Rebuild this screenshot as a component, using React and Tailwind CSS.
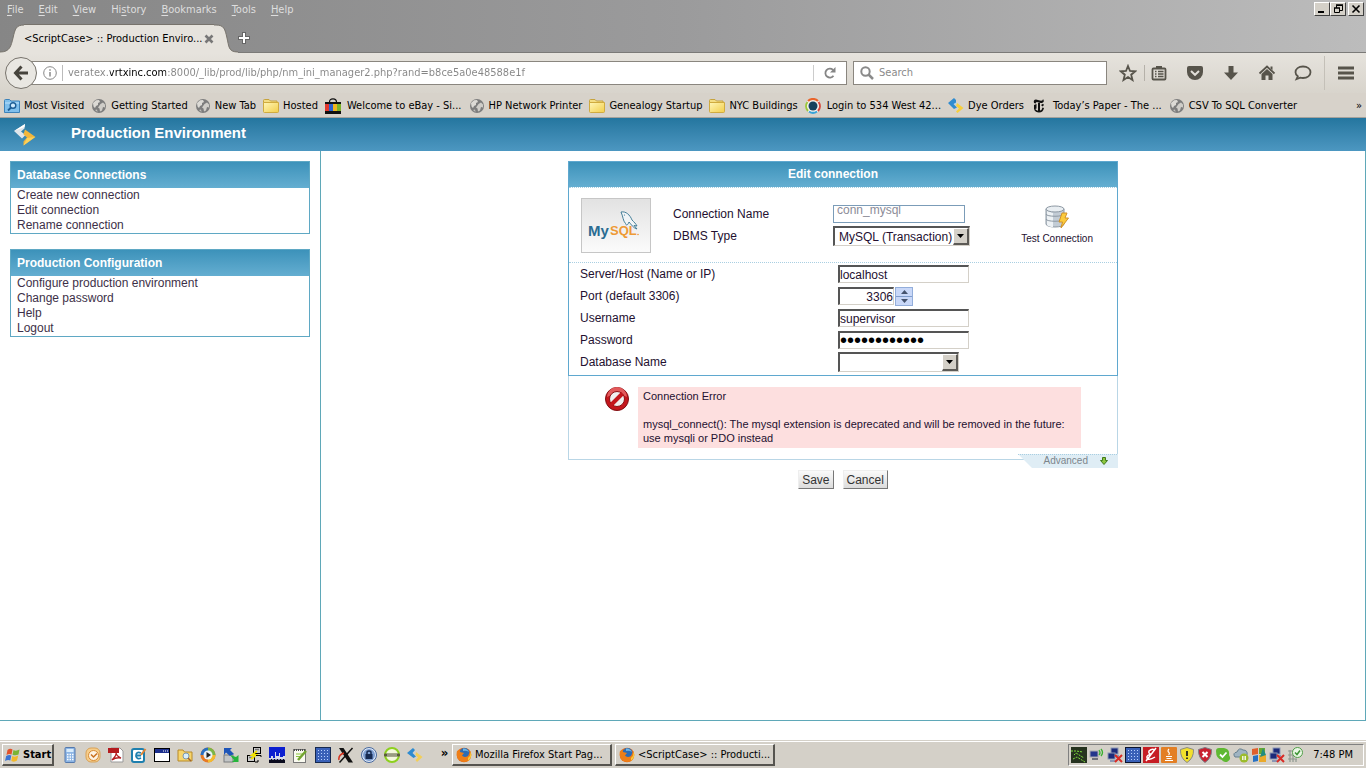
const menus = ['File', 'Edit', 'View', 'History', 'Bookmarks', 'Tools', 'Help'];
const underlined = [0, 0, 0, 2, 0, 0, 0];

function GlobeIcon() {
  return (
    <svg className="size-4 shrink-0" viewBox="0 0 16 16">
      <circle cx="8" cy="8" r="7" fill="#7d7d7d" />
      <path d="M2 5 L5 2.2 L8 2 L9 4 L7 5 L7 7 L5 8 L4 10 L2.5 8.5z" fill="#dcdad5" />
      <path d="M9.5 6 L12 4.5 L14 6.5 L14 9.5 L12 9 L11 12.5 L9 13.5 L8.5 10.5 L7 9.5z" fill="#cfcdc8" />
      <path d="M4 12 L6 11.5 L6.5 14z" fill="#c4c2bd" />
    </svg>
  );
}

function FolderIcon() {
  return (
    <svg className="size-4 shrink-0" viewBox="0 0 16 16">
      <defs>
        <linearGradient id="folder" x1="0" y1="0" x2="1" y2="1">
          <stop offset="0" stopColor="#fff6b8" />
          <stop offset="1" stopColor="#f2ce4a" />
        </linearGradient>
      </defs>
      <path d="M.5 3 V2.5 Q.5 1.5 1.5 1.5 H6 L7.5 3 H14 V6 H.5z" fill="#f3dd84" stroke="#c6a33e" />
      <path d="M.5 4.500 H15.500 V13.500 Q15.500 14.500 14.500 14.500 H1.500 Q.5 14.500 .5 13.500z" fill="url(#folder)" stroke="#d0ab3f" />
    </svg>
  );
}

function VisitedIcon() {
  return (
    <svg className="size-4 shrink-0" viewBox="0 0 16 16">
      <path d="M.5 2.500 Q.5 1.500 1.500 1.500 H5.500 L7 3 H15.500 V14.500 H.5z" fill="#7fbfec" stroke="#3d82b9" />
      <path d="M1 5 H15" stroke="#bfe2fb" />
      <circle cx="9" cy="7.500" r="2.800" fill="#cfeafd" stroke="#1d5d96" strokeWidth="1.400" />
      <path d="M7 9.500 L4 12.500" stroke="#1d5d96" strokeWidth="1.800" />
    </svg>
  );
}

function EbayIcon() {
  return (
    <svg className="size-4 shrink-0" viewBox="0 0 16 16">
      <path d="M4.500 4 Q4.500 .8 8 .8 Q11.500 .8 11.500 4" fill="none" stroke="#111" strokeWidth="1.200" />
      <rect y="4" width="16" height="12" fill="#111" />
      <rect y="6" width="4" height="7" fill="#e2382e" />
      <rect x="4" y="6" width="4" height="7" fill="#2a62d0" />
      <rect x="8" y="6" width="4" height="7" fill="#f0b51e" />
      <rect x="12" y="6" width="4" height="7" fill="#7cb32b" />
    </svg>
  );
}

function RingIcon() {
  return (
    <svg className="size-4 shrink-0" viewBox="0 0 16 16">
      <circle cx="8" cy="8" r="7.500" fill="#f3f1ec" />
      <path d="M3 3 A7 7 0 0 1 13 3" fill="none" stroke="#e9652c" strokeWidth="2" />
      <path d="M13.500 4 A7 7 0 0 1 13 13" fill="none" stroke="#d5473b" strokeWidth="2" />
      <path d="M12 13.500 A7 7 0 0 1 4 13.500" fill="none" stroke="#38a3d8" strokeWidth="2" />
      <path d="M3 13 A7 7 0 0 1 2.500 4" fill="none" stroke="#9bc63b" strokeWidth="2" />
      <circle cx="8" cy="8" r="4.500" fill="#17425c" />
    </svg>
  );
}

function ArrowsIcon() {
  return (
    <svg className="size-4 shrink-0" viewBox="0 0 16 16">
      <path d="M0 5 L6 0 L8 2 V5 L5.500 6 L9 9.500 L6 11z" fill="#2f8bd0" />
      <path d="M6 6 L8.500 4 L8 6.500z" fill="#a9d5f2" />
      <path d="M9 5 L15.500 10 L9.500 15 L8 13.500 L11 10.500 L8 8z" fill="#f7cf3d" />
    </svg>
  );
}

function TimesIcon() {
  return (
    <svg className="size-4 shrink-0" viewBox="0 0 16 16">
      <path d="M3 5 Q2 1.500 5 1.500 L10 2.800 Q12 3 12 1 Q14 3.800 11 5 Q9 5.300 6 4 Q4.500 4 4.800 5.500z" fill="#111" />
      <path d="M3 7 L5.500 6 V10.500 L3 11.500z M7 5 H9 V13.500 H7z M10 7 L12 5.800 L13 7 L11.500 8.500z" fill="#111" />
      <path d="M3 11.500 Q4.500 14.500 8 14.500 Q12 14.500 13 10 L11.500 9.500 Q11 12.500 8.500 12.800 Q5 12.800 4.500 11z" fill="#111" />
    </svg>
  );
}

const bookmarks = [
  { label: 'Most Visited', icon: VisitedIcon },
  { label: 'Getting Started', icon: GlobeIcon },
  { label: 'New Tab', icon: GlobeIcon },
  { label: 'Hosted', icon: FolderIcon },
  { label: 'Welcome to eBay - Si...', icon: EbayIcon, wide: true },
  { label: 'HP Network Printer', icon: GlobeIcon },
  { label: 'Genealogy Startup', icon: FolderIcon },
  { label: 'NYC Buildings', icon: FolderIcon },
  { label: 'Login to 534 West 42...', icon: RingIcon, wide: true },
  { label: 'Dye Orders', icon: ArrowsIcon },
  { label: 'Today’s Paper - The ...', icon: TimesIcon, wide: true },
  { label: 'CSV To SQL Converter', icon: GlobeIcon }
];

function WindowButton({ label, children }) {
  return (
    <button
      aria-label={label}
      className="flex h-[14px] w-4 items-center justify-center border border-t-white border-r-[#404040] border-b-[#404040] border-l-white bg-[#d4d0c8]"
    >
      <svg className="h-[10px] w-3" viewBox="0 0 12 10" fill="none" stroke="#000">{children}</svg>
    </button>
  );
}

function TitleBar() {
  return (
    <div className="bg-linear-to-r from-[#868686] via-[#9b9b9c] to-[#bcbcbc]">
      <div className="flex h-[23px] items-start justify-between">
        <nav className="flex gap-[15px] pl-[7px] leading-5 text-[#dedede]">
          {menus.map((menu, index) => (
            <button key={menu}>
              {menu.slice(0, underlined[index])}
              <span className="underline underline-offset-2">{menu[underlined[index]]}</span>
              {menu.slice(underlined[index] + 1)}
            </button>
          ))}
        </nav>
        <div className="flex pt-[2px] pr-[2px]">
          <WindowButton label="Minimize">
            <path d="M2 8 H8" strokeWidth="2" />
          </WindowButton>
          <WindowButton label="Restore">
            <path d="M4.500 4 V1.500 H10.500 V6.500 H8" />
            <path d="M4 1 H11 M2 4 H8" strokeWidth="1.500" />
            <path d="M2.500 4 V8.500 H7.500 V4" />
          </WindowButton>
          <div className="w-[2px]"></div>
          <WindowButton label="Close">
            <path d="M2.500 1.500 L9.500 8.500 M9.500 1.500 L2.500 8.500" strokeWidth="1.600" />
          </WindowButton>
        </div>
      </div>
      <div className="flex h-[30px] items-end border-b border-[#7b7a78]">
        <svg className="-mb-px h-[29px] w-6" viewBox="0 0 24 29">
          <path d="M0 29 V28 C10 28 11 22 13 14 C15 5 16 1 24 1 V29z" fill="#e6e3dd" />
          <path d="M0 28 C10 28 11 22 13 14 C15 5 16 1 24 1" fill="none" stroke="#77736c" />
        </svg>
        <div className="-mb-px flex h-[29px] w-[190px] items-center justify-between border-t border-[#77736c] bg-[#e6e3dd]">
          <span className="whitespace-nowrap text-black">&lt;ScriptCase&gt; :: Production Enviro...</span>
          <button aria-label="Close tab">
            <svg className="size-[10px]" viewBox="0 0 10 10">
              <path d="M1.500 1.500 L8.500 8.500 M8.500 1.500 L1.500 8.500" stroke="#777" strokeWidth="2.600" />
            </svg>
          </button>
        </div>
        <svg className="-mb-px h-[29px] w-6" viewBox="0 0 24 29">
          <path d="M24 29 V28 C14 28 15 22 13 14 C11 5 10 1 2 1 H0 V29z" fill="#e6e3dd" />
          <path d="M24 28 C14 28 15 22 13 14 C11 5 10 1 2 1 H0" fill="none" stroke="#77736c" />
        </svg>
        <button aria-label="New tab" className="mb-2">
          <svg className="size-3" viewBox="0 0 12 12">
            <path d="M6 0 V12 M0 6 H12" stroke="#666" strokeWidth="4" />
            <path d="M6 1 V11 M1 6 H11" stroke="#fff" strokeWidth="2" />
          </svg>
        </button>
      </div>
    </div>
  );
}

function ToolButton({ label, children }) {
  return (
    <button aria-label={label} className="flex w-9 justify-center">
      <svg className="size-[18px]" viewBox="0 0 18 18" fill="#57544b">{children}</svg>
    </button>
  );
}

function NavBar() {
  return (
    <div className="flex h-10 items-center bg-linear-to-b from-[#e6e3dd] to-[#d8d4cc] pl-[5px]">
      <button aria-label="Back" className="z-10 flex size-8 shrink-0 items-center justify-center rounded-full border border-[#77736c] bg-[#e9e7e2]">
        <svg className="size-4" viewBox="0 0 16 16" fill="none" stroke="#46433c" strokeWidth="3">
          <path d="M8.500 1.500 L2.500 8 L8.500 14.500 M3 8 H15" />
        </svg>
      </button>
      <div className="-ml-2 flex h-6 grow items-center border border-[#8a867f] bg-white pl-[13px]">
        <svg className="size-[14px] shrink-0" viewBox="0 0 14 14" fill="none" stroke="#888">
          <circle cx="7" cy="7" r="6.300" />
          <path d="M7 6 V10.500" strokeWidth="1.500" />
          <path d="M7 3.200 V4.700" strokeWidth="1.500" />
        </svg>
        <div className="mx-[5px] h-4 w-px bg-[#bbb]"></div>
        <input
          aria-label="Address"
          defaultValue="veratex.vrtxinc.com:8000/_lib/prod/lib/php/nm_ini_manager2.php?rand=b8ce5a0e48588e1f"
          className="min-w-0 grow bg-linear-[90deg,#858585_42px,#000_42px,#000_98px,#858585_98px] bg-clip-text text-transparent outline-none"
        />
        <div className="h-4 w-px bg-[#ccc]"></div>
        <button aria-label="Reload" className="flex w-8 justify-center">
          <svg className="size-3" viewBox="0 0 12 12">
            <path d="M9.500 8.800 A4.500 4.500 0 1 1 9 2.800" fill="none" stroke="#858585" strokeWidth="1.800" />
            <path d="M11.500 0 V5.500 H6z" fill="#858585" />
          </svg>
        </button>
      </div>
      <div className="ml-[6px] flex h-6 w-[254px] items-center gap-[5px] border border-[#8a867f] bg-white pl-[6px]">
        <svg className="size-[14px] shrink-0" viewBox="0 0 14 14" fill="none" stroke="#8a8a8a" strokeWidth="2">
          <circle cx="5.500" cy="5.500" r="4.200" />
          <path d="M8.500 8.500 L13 13" strokeWidth="2.500" />
        </svg>
        <input aria-label="Search" placeholder="Search" className="min-w-0 grow outline-none placeholder:text-[#8a8a8a]" />
      </div>
      <div className="flex items-center pl-[3px]">
        <ToolButton label="Bookmark this page">
          <path d="M9 2 L11 7 L16.200 7.300 L12.200 10.700 L13.500 16 L9 13 L4.500 16 L5.800 10.700 L1.800 7.300 L7 7z" fill="none" stroke="#57544b" strokeWidth="1.800" />
        </ToolButton>
        <div className="-mr-1 -ml-[2px] h-4 w-px bg-[#b5b1a9]"></div>
        <ToolButton label="Bookmarks">
          <path d="M6 2 H12 V5 H6z" />
          <rect x="2.500" y="4.500" width="13" height="11" rx="1" fill="none" stroke="#57544b" strokeWidth="1.800" />
          <path d="M5 7.500 H6.500 M8 7.500 H13.500 M5 10 H6.500 M8 10 H13.500 M5 12.500 H6.500 M8 12.500 H13.500" stroke="#57544b" strokeWidth="1.300" />
        </ToolButton>
        <ToolButton label="Pocket">
          <path d="M1 4 Q1 2 3 2 H15 Q17 2 17 4 V8 A8 8 0 0 1 1 8z" />
          <path d="M5 7 L9 10.800 L13 7" fill="none" stroke="#e2dfd9" strokeWidth="2" />
        </ToolButton>
        <ToolButton label="Downloads">
          <path d="M6.500 2 H11.500 V8.500 H16 L9 16 L2 8.500 H6.500z" />
        </ToolButton>
        <ToolButton label="Home">
          <path d="M1.500 9.500 L9 2.500 L16.500 9.500" fill="none" stroke="#57544b" strokeWidth="1.800" />
          <path d="M3.500 10 L9 5 L14.500 10 V16 H10.500 V11.500 H7.500 V16 H3.500z M12.500 2.500 H14.500 V6 L12.500 4.500z" />
        </ToolButton>
        <ToolButton label="Hello">
          <path d="M9 2.500 C13.500 2.500 16.500 5 16.500 8.300 C16.500 11.500 13.500 14 9 14 C8 14 7 13.900 6.200 13.600 L2.500 15 L3.800 12.300 C2.300 11.300 1.500 10 1.500 8.300 C1.500 5 4.500 2.500 9 2.500z" fill="none" stroke="#57544b" strokeWidth="1.800" />
        </ToolButton>
        <div className="ml-[3px] h-[34px] w-px bg-[#c4c0b8]"></div>
        <button aria-label="Open menu" className="flex w-[41px] justify-center">
          <svg className="h-[14px] w-4" viewBox="0 0 16 14">
            <path d="M0 2 H16 M0 7 H16 M0 12 H16" stroke="#57544b" strokeWidth="3" />
          </svg>
        </button>
      </div>
    </div>
  );
}

function BookmarkBar() {
  return (
    <div className="flex h-[25px] items-center justify-between border-b border-[#a5a29c] bg-[#d7d2ca] px-1 pt-[2px] text-black">
      <div className="flex items-center gap-[7px]">
        {bookmarks.map(({ label, icon: Icon, wide }) => (
          <a key={label} href="#" className={`flex items-center whitespace-nowrap ${wide ? 'gap-[6px]' : 'gap-1'}`}>
            <Icon />
            {label}
          </a>
        ))}
      </div>
      <button>»</button>
    </div>
  );
}

function SideMenu({ title, links }) {
  return (
    <section className="border border-[#5fa8c4]">
      <h2 className="bg-linear-to-b from-[#3c92ba] to-[#64aed1] px-[6px] leading-[26px] font-bold text-white">{title}</h2>
      <ul className="px-[6px]">
        {links.map((link) => (
          <li key={link} className="leading-[15px]">
            <a href="#" className="text-[#3d3048]">{link}</a>
          </li>
        ))}
      </ul>
    </section>
  );
}

function DropArrow() {
  return (
    <span className="pointer-events-none absolute top-[2px] right-px bottom-px flex w-4 items-center justify-center border-t border-r-2 border-b-2 border-l border-t-white border-r-[#5c5a56] border-b-[#5c5a56] border-l-white bg-[#d4d0c8]">
      <svg className="h-1 w-[7px]" viewBox="0 0 7 4">
        <path d="M0 0 H7 L3.500 4z" />
      </svg>
    </span>
  );
}

const sunken = 'border-t-2 border-l-2 border-r border-b border-t-[#555] border-l-[#555] border-r-[#d4d0c8] border-b-[#d4d0c8] bg-white';

function MysqlLogo() {
  return (
    <svg className="h-[55px] w-[70px]" viewBox="0 0 70 55">
      <defs>
        <linearGradient id="tile" x1="0" y1="0" x2="0" y2="1">
          <stop offset="0" stopColor="#e2e2e2" />
          <stop offset="1" stopColor="#fbfbfb" />
        </linearGradient>
      </defs>
      <rect x=".5" y=".5" width="69" height="54" fill="url(#tile)" stroke="#c6c6c6" />
      <path d="M40 14 C45 13 49 17 51 22 C53 24 55 26 56 28 L53 27.500 L56 31 C52 30 50 26 48 24 C47 27 45 28 44.500 25.500 C42 23 42 18 40 14z" fill="#f1f5f7" stroke="#34738e" strokeWidth=".9" />
      <circle cx="43.500" cy="17" r=".6" fill="#34738e" />
      <text x="7" y="38" fontSize="15" fontWeight="bold" fontFamily="Liberation Sans, sans-serif" fill="#2a6c92">My</text>
      <text x="29" y="37" fontSize="13" fontWeight="bold" fontFamily="Liberation Sans, sans-serif" fill="#ee9a35">SQL</text>
      <circle cx="57" cy="36.500" r=".8" fill="#ee9a35" />
    </svg>
  );
}

function DatabaseIcon() {
  return (
    <svg className="h-6 w-6" viewBox="0 0 24 24">
      <path d="M1 4 V19 C1 23 19 23 19 19 V4z" fill="#c3ccd5" stroke="#8d98a3" />
      <path d="M2 6 V20 C3 21.500 6 22 8 22 V8z" fill="#eef2f5" />
      <ellipse cx="10" cy="4" rx="9" ry="3" fill="#e9eef2" stroke="#8d98a3" />
      <path d="M1 9 C1 12 19 12 19 9 M1 14 C1 17 19 17 19 14" fill="none" stroke="#8d98a3" />
      <path d="M17 8 H22 L20 13 H23.500 L16 23 L17.500 17 H14z" fill="#fbcb3c" stroke="#d0912a" />
    </svg>
  );
}

function ErrorIcon() {
  return (
    <svg className="size-6 shrink-0" viewBox="0 0 24 24">
      <circle cx="12" cy="12" r="11.500" fill="#c4161c" stroke="#7d1013" />
      <path d="M2 10 A10 10 0 0 1 22 10 Q12 4 2 10z" fill="#e2595b" />
      <circle cx="12" cy="12" r="7.500" fill="#efefef" stroke="#8d1013" />
      <path d="M6.500 17.500 L17.500 6.500" stroke="#c4161c" strokeWidth="4" />
    </svg>
  );
}

function TextRow({ id, label, children }) {
  return (
    <div className="flex h-[22px] items-center">
      <label htmlFor={id} className="w-[258px]">{label}</label>
      {children}
    </div>
  );
}

function ConnectionForm() {
  return (
    <form className="mx-auto w-[550px] text-[#241030]" onSubmit={(e) => e.preventDefault()}>
      <div className="border border-[#5fa8cf] bg-white">
        <h2 className="bg-linear-to-b from-[#3c92ba] to-[#64aed1] pr-5 text-center leading-[25px] font-bold text-white">
          Edit connection
        </h2>
        <div className="flex h-[76px] items-start border-y border-dotted border-[#a9cfe2] pt-[10px] pl-3">
          <MysqlLogo />
          <div className="ml-[22px] pt-[5px]">
            <div className="flex h-[22px] items-center">
              <label htmlFor="name" className="w-40">Connection Name</label>
              <input
                id="name"
                disabled
                defaultValue="conn_mysql"
                className="h-[18px] w-[132px] border border-[#7b9cb8] bg-white px-[3px] pb-[9px] text-[#8c8c98]"
              />
            </div>
            <div className="flex h-[22px] items-center">
              <label htmlFor="type" className="w-40">DBMS Type</label>
              <div className="relative">
                <select id="type" className={`block h-5 w-[137px] appearance-none pl-1 leading-4 ${sunken}`}>
                  <option>MySQL (Transaction)</option>
                </select>
                <DropArrow />
              </div>
            </div>
          </div>
          <button type="button" className="mr-6 ml-auto flex flex-col items-center gap-[2px] pt-[7px] text-[10px]">
            <DatabaseIcon />
            Test Connection
          </button>
        </div>
        <div className="pb-[2px] pl-[11px]">
          <TextRow id="host" label="Server/Host (Name or IP)">
            <input id="host" defaultValue="localhost" className={`h-[18px] w-[131px] ${sunken}`} />
          </TextRow>
          <TextRow id="port" label="Port (default 3306)">
            <input id="port" defaultValue="3306" className={`h-[18px] w-14 text-right ${sunken}`} />
            <span className="ml-px flex h-[19px] w-[18px] flex-col border border-[#93aedb] bg-[#c9d8f8]">
              <button type="button" aria-label="Increase port" className="flex grow items-center justify-center border-b border-[#7f9ccb]">
                <svg className="h-1 w-[7px]" viewBox="0 0 7 4"><path d="M0 4 H7 L3.500 0z" fill="#45536e" /></svg>
              </button>
              <button type="button" aria-label="Decrease port" className="flex grow items-center justify-center">
                <svg className="h-1 w-[7px]" viewBox="0 0 7 4"><path d="M0 0 H7 L3.500 4z" fill="#45536e" /></svg>
              </button>
            </span>
          </TextRow>
          <TextRow id="user" label="Username">
            <input id="user" defaultValue="supervisor" className={`h-[18px] w-[131px] ${sunken}`} />
          </TextRow>
          <TextRow id="pass" label="Password">
            <input
              id="pass"
              type="password"
              defaultValue="supervisor12"
              className={`h-[18px] w-[131px] text-[20px] leading-4 text-black ${sunken}`}
            />
          </TextRow>
          <TextRow id="database" label="Database Name">
            <div className="relative">
              <select id="database" className={`block h-5 w-[121px] appearance-none ${sunken}`}></select>
              <DropArrow />
            </div>
          </TextRow>
        </div>
      </div>

      <div className="relative flex border border-t-0 border-[#b9d6e6] pt-[11px] pr-9 pb-[11px] pl-9">
        <ErrorIcon />
        <div className="ml-[9px] grow bg-[#fddfdf] px-[5px] pt-[2px] pb-[3px] text-[11px] leading-[14px]">
          <p>Connection Error</p>
          <p className="pt-[14px]">
            mysql_connect(): The mysql extension is deprecated and will be removed in the future: use mysqli or PDO instead
          </p>
        </div>
        <button type="button" className="absolute -right-px -bottom-[9px] h-[14px] w-[100px] text-[10px] leading-[14px] text-[#7d868c]">
          <svg className="absolute inset-0" viewBox="0 0 100 14">
            <path d="M0 0 H100 V14 H14z" fill="#dfedf5" />
            <path d="M0 .5 H100" stroke="#a9cfe2" strokeDasharray="1 1" />
          </svg>
          <span className="relative flex items-center justify-end gap-3 pr-[10px]">
            Advanced
            <svg className="size-2" viewBox="0 0 8 8">
              <path d="M2.500 .5 H5.500 V3.500 H7.500 L4 7.500 L.5 3.500 H2.500z" fill="#8cc63e" stroke="#417a1c" />
            </svg>
          </span>
        </button>
      </div>

      <div className="mt-[10px] flex justify-center gap-[9px] text-[#333]">
        <FormButton>Save</FormButton>
        <FormButton>Cancel</FormButton>
      </div>
    </form>
  );
}

function FormButton({ children }) {
  return (
    <button
      type="button"
      className="h-[19px] border border-t-[#eee] border-r-[#777] border-b-[#777] border-l-[#eee] bg-linear-to-b from-[#fafafa] to-[#dcdcdc] px-[3px] leading-4"
    >
      {children}
    </button>
  );
}

function LogoIcon() {
  return (
    <svg className="h-6 w-6" viewBox="0 0 24 24">
      <path d="M1 8 L12 1 L11.500 5.500 L8 8.500 L12.500 12 L9 15.500z" fill="#dfe5ea" />
      <path d="M1 8 L12 1 L11.500 4z" fill="#fff" />
      <path d="M12 6.500 L22.500 14 L10.500 22.500 V18.500 L14 14.500 L10.500 11.500z" fill="#f3b73c" />
      <path d="M14 15 L22 14 L10.500 22.500z" fill="#fcd25c" />
    </svg>
  );
}

function FirefoxIcon() {
  return (
    <svg className="size-4 shrink-0" viewBox="0 0 16 16">
      <circle cx="8" cy="8" r="7.300" fill="#e66a14" />
      <circle cx="8.500" cy="6" r="5" fill="#2d6cb4" />
      <path d="M7 1.500 Q11 1 13 5 Q10 3 7 4z" fill="#6cb5e5" />
      <path d="M1 4 L3.500 2.500 L4 5 L8 6 L6 8.500 Q8 11 12 9 L14.500 4 Q16.500 10 12 14 Q6 16.500 2 12 Q0 8 1 4z" fill="#ee7e18" />
      <path d="M12 11 Q15 9 14.500 4.500 Q17 10 12 14z" fill="#f9cb38" />
    </svg>
  );
}

const launchers = [
  ['Calculator', <>
    <rect x="3" y=".5" width="10" height="15" rx="1" fill="#8db5e4" stroke="#5479ad" />
    <rect x="4.500" y="2" width="7" height="3" fill="#d9ecfb" />
    <path d="M5 7.500 H11.500 M5 10 H11.500 M5 12.500 H11.500" stroke="#fff" strokeWidth="1.500" strokeDasharray="1.500 1" />
  </>],
  ['Outlook', <>
    <rect x="1" y="1" width="14" height="14" rx="5" fill="#f6cd8a" stroke="#d9a256" />
    <circle cx="8.500" cy="8.500" r="5" fill="#fdf3e2" stroke="#d58a35" />
    <path d="M6 7.500 L8.500 10 L12 6.500" fill="none" stroke="#c9701f" strokeWidth="1.500" />
  </>],
  ['PDF reader', <>
    <path d="M3 1 H12 L15 4 V15 H3z" fill="#fff" stroke="#999" />
    <rect width="11" height="5" y="1" fill="#b41b1f" />
    <path d="M4 13 Q9 8 8 5 Q8 9 13 11 Q8 10 4 13z" fill="none" stroke="#b41b1f" strokeWidth="1.300" />
  </>],
  ['Notes', <>
    <rect x="1" y="2" width="12" height="13" rx="2" fill="#fff" stroke="#1e7fae" strokeWidth="2" />
    <path d="M10 6 Q5 4 5 9 Q6 13 10 11 M6 8.500 H10" fill="none" stroke="#1e7fae" strokeWidth="1.800" />
    <path d="M10 8 L14.500 2" stroke="#e08433" strokeWidth="2" />
  </>],
  ['Command window', <>
    <rect x=".5" y="1.500" width="15" height="13" fill="#fff" stroke="#000" />
    <rect x="1" y="2" width="14" height="4" fill="#1c2f8e" />
    <path d="M9 4 H14" stroke="#fff" strokeDasharray="1 1" />
  </>],
  ['Explorer', <>
    <path d="M1 3 H6 L7.500 5 H15 V14 H1z" fill="#f7d56b" stroke="#b78a29" />
    <circle cx="9" cy="9" r="3" fill="#d9eefa" stroke="#7c98ae" />
    <path d="M11 11 L14 14" stroke="#a0622b" strokeWidth="1.500" />
  </>],
  ['Media Player', <>
    <circle cx="8" cy="8" r="7.500" fill="#e77a25" />
    <path d="M8 .5 A7.500 7.500 0 0 1 15.500 8 H8z" fill="#7ab648" />
    <path d="M.5 8 A7.500 7.500 0 0 1 8 .5 V8z" fill="#2a6fc0" />
    <path d="M8 15.500 A7.500 7.500 0 0 0 15.500 8 H8z" fill="#f4bb2f" />
    <circle cx="8" cy="8" r="4.500" fill="#e9f2f8" />
    <path d="M6.500 5 L11 8 L6.500 11z" fill="#222" />
  </>],
  ['Sync', <>
    <rect x="1" y="8" width="9" height="7" fill="#c2c5c6" stroke="#7a7d7f" />
    <path d="M1 1 H9 L7 3 L11 7 L7 9 L3 5.500 L1 8z" fill="#1e55b8" />
    <path d="M7 8 L13 10 L15.500 8 V15 H9 L11 13z" fill="#27b53d" />
  </>],
  ['PuTTY', <>
    <rect x="7.500" y=".5" width="7" height="6" fill="#ccc" stroke="#000" />
    <rect x="1.500" y="8.500" width="7" height="6" fill="#ccc" stroke="#000" />
    <path d="M9 2.500 H13 M3 10.500 H7" stroke="#777" strokeWidth="1.500" />
    <path d="M11 4 L6 8 H10 L5 12" fill="none" stroke="#f0e100" strokeWidth="1.800" />
    <path d="M10 8.500 H15 V10 M9 15 H12 V13" fill="none" stroke="#000" />
  </>],
  ['City', <>
    <rect width="16" height="16" fill="#0c1fd0" />
    <path d="M0 16 V11 H2 V9 H4 V11 H6 V5 H7 V9 H10 V6 H11 V10 H14 V9 H16 V16z" fill="#d9dcec" />
    <path d="M0 12 H16 V16 H0z" fill="#0b0b1e" />
    <path d="M0 12.500 H16" stroke="#8d93b5" strokeDasharray="2 1" />
  </>],
  ['Notepad', <>
    <rect x="1.500" y="2.500" width="12" height="13" fill="#fafaf0" stroke="#777" />
    <path d="M2 3 H13" stroke="#4a4a4a" strokeWidth="2" strokeDasharray="1 1" />
    <path d="M4 7 H11 M4 9.500 H9" stroke="#8cc63e" />
    <path d="M6 13 L14 4" stroke="#73a52f" strokeWidth="2.500" />
  </>],
  ['Grid', <>
    <rect x=".5" y=".5" width="15" height="15" fill="#3a61b8" stroke="#16294f" />
    <path d="M3 3.500 H13.500 M3 6.500 H13.500 M3 9.500 H13.500 M3 12.500 H13.500" stroke="#b9d1ff" strokeDasharray="1 2" />
  </>],
  ['X server', <>
    <path d="M1 1 H5.500 L15 15.500 H10.500z" fill="#111" />
    <path d="M14.500 1 L1.500 15.500" stroke="#111" strokeWidth="1.500" />
    <path d="M1 13 Q0 8 6 6" fill="none" stroke="#d6331f" strokeWidth="1.500" />
  </>],
  ['Lock', <>
    <circle cx="8" cy="8" r="7.500" fill="#dfe9f7" stroke="#46679c" />
    <circle cx="8" cy="8" r="6" fill="#7e9fd1" />
    <rect x="4.500" y="7" width="7" height="5" fill="#172b52" />
    <path d="M6 7 V5.500 Q6 4 8 4 Q10 4 10 5.500 V7" fill="none" stroke="#172b52" strokeWidth="1.500" />
  </>],
  ['Modem', <>
    <circle cx="8" cy="8" r="7" fill="#f3f8dc" stroke="#8dd01e" strokeWidth="2" />
    <rect y="6.500" width="16" height="3" rx="1" fill="#5b5b3d" />
    <path d="M3 8 H13" stroke="#d7ddc7" />
  </>],
  ['ScriptCase', <>
    <path d="M0 6 L6 1 L8 3 L5.500 6 L9 9.500 L6.500 11z" fill="#2f8bd0" />
    <path d="M9 5 L15.500 10 L10 15 L8.500 13 L11 10.500 L8.500 8z" fill="#f3cf57" />
  </>]
];

const networkDown = <>
  <rect x="4" y="1" width="7" height="6" fill="#1c2b7a" stroke="#8b97b5" />
  <rect x="1" y="6" width="7" height="6" fill="#1c2b7a" stroke="#8b97b5" />
  <path d="M3 14 H8 M9 9 H12" stroke="#8b97b5" strokeWidth="2" />
  <path d="M8 8 L15 15 M15 8 L8 15" stroke="#d92b25" strokeWidth="2" />
</>;

const gridTray = <>
  <rect x=".5" y=".5" width="15" height="15" fill="#3a61b8" stroke="#0c1530" />
  <path d="M3 3.500 H13.500 M3 6.500 H13.500 M3 9.500 H13.500 M3 12.500 H13.500" stroke="#b9d1ff" strokeDasharray="1 2" />
</>;

const trayIcons = [
  ['CPU meter', <>
    <rect width="16" height="16" fill="#26331f" />
    <path d="M0 4 H5 L12 5 M3 8 L5 6 L13 11 M2 12 L6 10 L14 15" fill="none" stroke="#7fdd3c" strokeDasharray="2 1" />
  </>],
  ['Wireless', <>
    <rect x="1" y="4" width="8" height="6" fill="#24378c" stroke="#a5a8af" />
    <path d="M3 12 H9" stroke="#70747b" strokeWidth="2" />
    <path d="M10 3 Q12 6 10 8 M12 2 Q15 5.500 12 9" fill="none" stroke="#38b12e" strokeWidth="1.300" />
  </>],
  ['Network', networkDown],
  ['Process grid', gridTray],
  ['Script', <>
    <rect width="16" height="16" fill="#c61d23" />
    <path d="M12 3 Q9 1 6 4 Q5 7 9 7 Q3 8 4 11 Q6 14 12 10 M3 14 L13 1" fill="none" stroke="#fff" strokeWidth="1.500" />
  </>],
  ['Java', <>
    <rect width="16" height="16" rx="1" fill="#e37f24" />
    <path d="M8 2 Q6 4 8 5.500 Q9 7 7.500 8 M5 9.500 H11 M5.500 11.500 H10.500 M4 13.500 H12" fill="none" stroke="#fff" strokeWidth="1.200" />
  </>],
  ['Warning shield', <>
    <path d="M8 .5 L14.500 2.500 Q15 11 8 15.500 Q1 11 1.500 2.500z" fill="#f3e02c" stroke="#8b8b80" />
    <path d="M8 4 V9 M8 10.500 V12" stroke="#222" strokeWidth="1.800" />
  </>],
  ['Alert shield', <>
    <path d="M8 .5 L14.500 2.500 Q15 11 8 15.500 Q1 11 1.500 2.500z" fill="#c9202f" stroke="#7d7d86" />
    <path d="M5.500 5 L10.500 10 M10.500 5 L5.500 10" stroke="#fff" strokeWidth="2" />
  </>],
  ['Status', <>
    <path d="M1 4 Q1 1 4 1 H9 Q15 2 14 8 Q17 13 12 15 Q8 15 7 13 Q1 12 1 4z" fill="#5fb832" />
    <path d="M5 7.500 L7.500 10 L11.500 5.500" fill="none" stroke="#fff" strokeWidth="1.800" />
  </>],
  ['Cloud', <>
    <path d="M2 10 Q-1 6 4 5 Q6 0 10 3 Q15 3 14 8 Q14 10 12 10z" fill="#9fb4c2" stroke="#66808f" />
    <circle cx="11" cy="11" r="4.500" fill="#9cbc2b" />
    <path d="M9.800 9 V13 M12.200 9 V13" stroke="#fff" strokeWidth="1.300" />
  </>],
  ['Windows', <>
    <path d="M1 2 L7 1 V7 L1 8z" fill="#e0602c" />
    <path d="M8 1 H14 V7 H8z" fill="#67a832" />
    <path d="M2 9 L7 8 V14 L2 15z" fill="#2871c2" />
    <path d="M8 8 H15 V15 H8z" fill="#eaa92a" />
    <path d="M12 1 L15 8 L9 10z" fill="#1f8c80" />
  </>],
  ['Network 2', networkDown],
  ['Device check', <>
    <path d="M1 4 H6 M1 8 H6 M1 12 H10 M3 15 V3 M6 15 V8 M9 15 V12" stroke="#8e9890" strokeWidth="1.200" />
    <circle cx="10.500" cy="5.500" r="5" fill="#e9f6e4" stroke="#4f9e47" />
    <path d="M8 5.500 L10 7.500 L13 3.500" fill="none" stroke="#3c9434" strokeWidth="1.500" />
  </>]
];

const raised = 'border-t border-l border-r-2 border-b-2 border-t-white border-l-white border-r-[#56544f] border-b-[#56544f] bg-[#d4d0c8]';

function Taskbar() {
  return (
    <footer className="flex h-7 shrink-0 items-center border-t border-[#d4d0c8] bg-[#d4d0c8] pl-[2px] text-black shadow-[inset_0_1px_0_#fff]">
      <button className={`flex h-[22px] w-[52px] items-center gap-[2px] pt-[2px] pl-[2px] font-bold ${raised}`}>
        <svg className="size-4 shrink-0" viewBox="0 0 16 16">
          <path d="M2.500 3 Q5 1 7.500 2.500 L6.500 7.500 Q4 6.500 1.500 8z" fill="#e2532b" />
          <path d="M8.500 3 Q11 4.500 14.500 2.500 L13.500 7.500 Q10.500 9 7.500 7.700z" fill="#7ab434" />
          <path d="M1.200 9 Q4 7.500 6.300 8.500 L5.300 13.500 Q3 12.500 0 14z" fill="#3b74d3" />
          <path d="M7.300 9 Q10 10.500 13.200 8.500 L12 13.500 Q9.500 15.500 6.300 14z" fill="#f3b92a" />
        </svg>
        Start
      </button>
      <div className="flex gap-[7px] pl-2">
        {launchers.map(([name, drawing]) => (
          <button key={name} aria-label={name}>
            <svg className="size-4" viewBox="0 0 16 16">{drawing}</svg>
          </button>
        ))}
      </div>
      <button className="ml-[14px] w-[15px] pb-1 text-[13px] font-bold">»</button>
      {['Mozilla Firefox Start Pag...', '<ScriptCase> :: Producti...'].map((task) => (
        <button key={task} className={`mr-[3px] flex h-[22px] w-40 items-center gap-[3px] pt-[2px] pl-[3px] whitespace-nowrap ${raised}`}>
          <FirefoxIcon />
          {task}
        </button>
      ))}
      <div className="mr-[2px] ml-auto flex h-[22px] items-center gap-[2px] border border-t-[#808080] border-r-white border-b-white border-l-[#808080] pr-[10px] pl-[2px]">
        {trayIcons.map(([name, drawing]) => (
          <svg key={name} role="img" aria-label={name} className="size-4" viewBox="0 0 16 16">{drawing}</svg>
        ))}
        <time className="pt-px pl-2">7:48 PM</time>
      </div>
    </footer>
  );
}

export default function App() {
  return (
    <div className="flex h-screen flex-col bg-white font-['DejaVu_Sans_Condensed','DejaVu_Sans',sans-serif] text-[11px]">
      <TitleBar />
      <NavBar />
      <BookmarkBar />
      <div className="flex grow flex-col font-['Liberation_Sans',sans-serif] text-[12px]">
        <header className="flex h-[33px] items-center bg-linear-to-b from-[#24769f] to-[#4c97c1] pl-[13px]">
          <LogoIcon />
          <h1 className="pb-[2px] pl-[34px] text-[15px] font-bold text-white">Production Environment</h1>
        </header>
        <main className="mb-[19px] flex grow border-r border-b border-[#5fa8b8]">
          <aside className="flex w-[321px] flex-col gap-[15px] border-r border-[#5fa8b8] p-[10px]">
            <SideMenu
              title="Database Connections"
              links={['Create new connection', 'Edit connection', 'Rename connection']}
            />
            <SideMenu
              title="Production Configuration"
              links={['Configure production environment', 'Change password', 'Help', 'Logout']}
            />
          </aside>
          <div className="grow pt-[10px]">
            <ConnectionForm />
          </div>
        </main>
      </div>
      <Taskbar />
    </div>
  );
}
